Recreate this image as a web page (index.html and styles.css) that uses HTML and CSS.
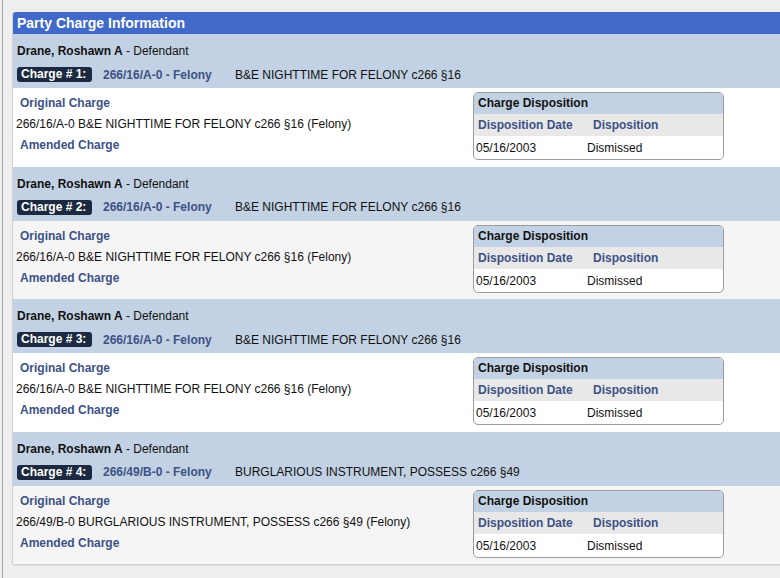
FILE: index.html
```html
<!DOCTYPE html>
<html>
<head>
<meta charset="utf-8">
<link rel="stylesheet" href="styles.css">
</head>
<body>
<div class="page">
  <div class="panel">
    <div class="panel-title">Party Charge Information</div>

    <div class="charge">
      <div class="band">
        <div class="party"><b>Drane, Roshawn A</b> - Defendant</div>
        <div class="charge-row">
          <span class="badge">Charge # 1:</span>
          <span class="code">266/16/A-0 - Felony</span>
          <span class="desc">B&amp;E NIGHTTIME FOR FELONY c266 §16</span>
        </div>
      </div>
      <div class="detail">
        <div class="info">
          <div class="label">Original Charge</div>
          <div class="text">266/16/A-0 B&amp;E NIGHTTIME FOR FELONY c266 §16 (Felony)</div>
          <div class="label">Amended Charge</div>
        </div>
        <div class="dispo">
          <div class="dispo-title">Charge Disposition</div>
          <div class="dispo-head"><span class="c1">Disposition Date</span><span class="c2">Disposition</span></div>
          <div class="dispo-row"><span class="c1">05/16/2003</span><span class="c2">Dismissed</span></div>
        </div>
      </div>
    </div>

    <div class="charge alt">
      <div class="band">
        <div class="party"><b>Drane, Roshawn A</b> - Defendant</div>
        <div class="charge-row">
          <span class="badge">Charge # 2:</span>
          <span class="code">266/16/A-0 - Felony</span>
          <span class="desc">B&amp;E NIGHTTIME FOR FELONY c266 §16</span>
        </div>
      </div>
      <div class="detail">
        <div class="info">
          <div class="label">Original Charge</div>
          <div class="text">266/16/A-0 B&amp;E NIGHTTIME FOR FELONY c266 §16 (Felony)</div>
          <div class="label">Amended Charge</div>
        </div>
        <div class="dispo">
          <div class="dispo-title">Charge Disposition</div>
          <div class="dispo-head"><span class="c1">Disposition Date</span><span class="c2">Disposition</span></div>
          <div class="dispo-row"><span class="c1">05/16/2003</span><span class="c2">Dismissed</span></div>
        </div>
      </div>
    </div>

    <div class="charge">
      <div class="band">
        <div class="party"><b>Drane, Roshawn A</b> - Defendant</div>
        <div class="charge-row">
          <span class="badge">Charge # 3:</span>
          <span class="code">266/16/A-0 - Felony</span>
          <span class="desc">B&amp;E NIGHTTIME FOR FELONY c266 §16</span>
        </div>
      </div>
      <div class="detail">
        <div class="info">
          <div class="label">Original Charge</div>
          <div class="text">266/16/A-0 B&amp;E NIGHTTIME FOR FELONY c266 §16 (Felony)</div>
          <div class="label">Amended Charge</div>
        </div>
        <div class="dispo">
          <div class="dispo-title">Charge Disposition</div>
          <div class="dispo-head"><span class="c1">Disposition Date</span><span class="c2">Disposition</span></div>
          <div class="dispo-row"><span class="c1">05/16/2003</span><span class="c2">Dismissed</span></div>
        </div>
      </div>
    </div>

    <div class="charge alt">
      <div class="band">
        <div class="party"><b>Drane, Roshawn A</b> - Defendant</div>
        <div class="charge-row">
          <span class="badge">Charge # 4:</span>
          <span class="code">266/49/B-0 - Felony</span>
          <span class="desc">BURGLARIOUS INSTRUMENT, POSSESS c266 §49</span>
        </div>
      </div>
      <div class="detail">
        <div class="info">
          <div class="label">Original Charge</div>
          <div class="text">266/49/B-0 BURGLARIOUS INSTRUMENT, POSSESS c266 §49 (Felony)</div>
          <div class="label">Amended Charge</div>
        </div>
        <div class="dispo">
          <div class="dispo-title">Charge Disposition</div>
          <div class="dispo-head"><span class="c1">Disposition Date</span><span class="c2">Disposition</span></div>
          <div class="dispo-row"><span class="c1">05/16/2003</span><span class="c2">Dismissed</span></div>
        </div>
      </div>
    </div>
  </div>
</div>
</body>
</html>
```

FILE: styles.css
```css
html, body {
  margin: 0;
  padding: 0;
  background: #eeeeee;
  overflow: hidden;
}
body {
  font-family: "Liberation Sans", Arial, sans-serif;
  font-size: 12px;
  color: #111;
}
.page {
  margin-left: 2px;
  border-left: 1px solid #a8a8a8;
  min-height: 578px;
  padding: 12px 0 0 9px;
  box-sizing: border-box;
}
.panel {
  width: 800px;
  background: #fff;
  border-left: 1px solid #d2d2d2;
  border-bottom: 1px solid #cfcfcf;
  border-radius: 3px 0 0 3px;
  box-shadow: 0 1px 1px rgba(0,0,0,0.06);
}
.panel-title {
  height: 22px;
  line-height: 23px;
  background: #4169c9;
  color: #fff;
  font-weight: bold;
  font-size: 14px;
  padding-left: 4px;
  border-top-left-radius: 3px;
  box-sizing: border-box;
}
.band {
  background: #c2d1e3;
  padding: 9px 0 5px 4px;
}
.party {
  line-height: 16px;
}
.charge-row {
  display: flex;
  align-items: center;
  height: 17px;
  margin-top: 7px;
}
.badge {
  background: #1b2a41;
  color: #fff;
  font-weight: bold;
  line-height: 15px;
  height: 15px;
  padding: 0 4px;
  border-radius: 3px;
  width: 67px;
}
.code {
  color: #3d5285;
  font-weight: bold;
  margin-left: 11px;
  width: 121px;
}
.desc {
  margin-left: 11px;
}
.detail {
  display: grid;
  grid-template-columns: 460px 251px;
  padding: 4px 0 6.5px 0;
  background: #fff;
}
.alt .detail {
  background: #f5f5f5;
}
.info {
  padding-top: 3px;
}
.label {
  color: #3d5285;
  font-weight: bold;
  line-height: 16px;
  padding-left: 7px;
}
.text {
  line-height: 16px;
  padding-left: 3px;
  margin: 5px 0;
}
.dispo {
  border: 1px solid #9c9c9c;
  border-radius: 5px;
  overflow: hidden;
  background: #fff;
}
.dispo-title {
  background: #c2d1e3;
  font-weight: bold;
  height: 21px;
  line-height: 21px;
  padding-left: 4px;
}
.dispo-head, .dispo-row {
  display: grid;
  grid-template-columns: 111px 1fr;
}
.dispo-head {
  background: #e8e8e8;
  height: 22px;
  line-height: 22px;
  color: #3d5285;
  font-weight: bold;
}
.dispo-head .c1 { padding-left: 4px; }
.dispo-head .c2 { padding-left: 8px; }
.dispo-row {
  height: 23px;
  line-height: 24px;
}
.dispo-row .c1 { padding-left: 2px; }
.dispo-row .c2 { padding-left: 2px; }
```
